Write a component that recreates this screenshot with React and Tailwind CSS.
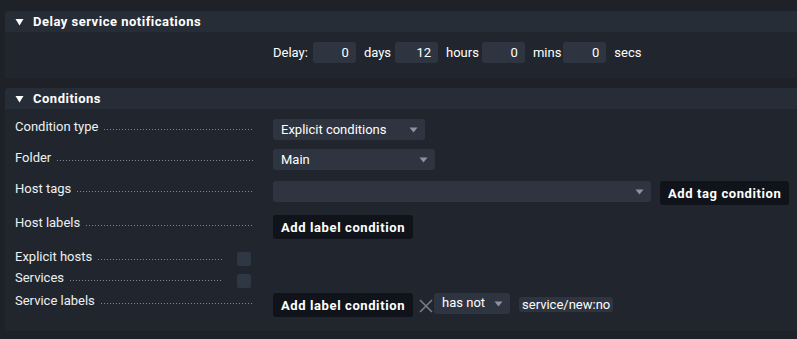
import React from "react";

const font = { fontFamily: "Roboto, 'Noto Sans', sans-serif" };

function Tri() {
  return (
    <svg width="9" height="8" viewBox="0 0 9 8" className="shrink-0">
      <path d="M0.5 1 L8.5 1 L4.5 7.5 Z" fill="#ffffff" />
    </svg>
  );
}

function Arrow() {
  return (
    <svg width="9" height="6" viewBox="0 0 9 6" className="shrink-0">
      <path d="M0.5 0.5 L8.5 0.5 L4.5 5.5 Z" fill="#8c939c" />
    </svg>
  );
}

function Header({ title }) {
  return (
    <div className="h-[21px] bg-[#272d37] flex items-center pl-[10px] rounded-tl-[4px]">
      <Tri />
      <span className="ml-[9px] text-[13px] font-bold text-white tracking-[0.5px] leading-[15px]">
        {title}
      </span>
    </div>
  );
}

function Label({ text, width = "w-[238px]" }) {
  return (
    <div className={`${width} shrink-0 flex items-end h-[15px]`}>
      <span className="text-[13px] leading-[15px] text-[#eef0f2] whitespace-nowrap">{text}</span>
      <div className="flex-1 ml-[6px] mb-[4px] h-px bg-[linear-gradient(to_right,#80868e_1px,transparent_1px)] bg-[length:3px_1px] bg-repeat-x" />
    </div>
  );
}

function Select({ text, width }) {
  return (
    <div className={`${width} h-[21px] bg-[#2e3541] rounded-[3px] flex items-center justify-between pl-[8px] pr-[7px]`}>
      <span className="text-[13px] leading-[15px] text-white">{text}</span>
      <Arrow />
    </div>
  );
}

function Button({ text }) {
  return (
    <div className="h-[24px] bg-[#10141a] rounded-[3px] flex items-center px-[8px] shrink-0">
      <span className="text-[13px] leading-[15px] font-bold text-white tracking-[0.6px] whitespace-nowrap">{text}</span>
    </div>
  );
}

function NumInput({ value }) {
  return (
    <div className="w-[43px] h-[21px] bg-[#2e3541] rounded-[3px] flex items-center justify-end pr-[7px]">
      <span className="text-[13px] leading-[15px] text-white">{value}</span>
    </div>
  );
}

function Checkbox() {
  return <div className="w-[14px] h-[14px] bg-[#2f3744] rounded-[2px]" />;
}

export default function App() {
  return (
    <div style={font} className="w-[797px] h-[339px] bg-[#1e2228] overflow-hidden pt-[11px] pl-[5px]">
      {/* Panel 1 */}
      <div className="w-[792px]">
        <Header title="Delay service notifications" />
        <div className="bg-[#21262e] h-[46px] pl-[268px] pt-[10px] flex items-start">
          <div className="flex items-center h-[21px] text-[13px] leading-[15px] text-white">
            <span>Delay:</span>
            <div className="ml-[5px] mr-[8px]"><NumInput value="0" /></div>
            <span>days</span>
            <div className="ml-[4px] mr-[8px]"><NumInput value="12" /></div>
            <span>hours</span>
            <div className="ml-[3px] mr-[8px]"><NumInput value="0" /></div>
            <span>mins</span>
            <div className="ml-[2px] mr-[8px]"><NumInput value="0" /></div>
            <span>secs</span>
          </div>
        </div>
      </div>

      {/* Panel 2 */}
      <div className="w-[792px] mt-[10px]">
        <Header title="Conditions" />
        <div className="bg-[#21262e] h-[222px] pl-[10px] pt-[10px]">
          <div className="flex items-start h-[21px]">
            <Label text="Condition type" />
            <div className="ml-[20px]"><Select text="Explicit conditions" width="w-[152px]" /></div>
          </div>
          <div className="flex items-start h-[21px] mt-[10px]">
            <Label text="Folder" />
            <div className="ml-[20px] -mt-px"><Select text="Main" width="w-[162px]" /></div>
          </div>
          <div className="flex items-start h-[24px] mt-[10px]">
            <Label text="Host tags" />
            <div className="ml-[20px] flex items-start gap-[9px]">
              <Select text="" width="w-[378px]" />
              <Button text="Add tag condition" />
            </div>
          </div>
          <div className="flex items-start h-[24px] mt-[10px]">
            <Label text="Host labels" />
            <div className="ml-[20px]"><Button text="Add label condition" /></div>
          </div>
          <div className="flex items-start h-[21px] mt-[10px]">
            <Label text="Explicit hosts" width="w-[207px]" />
            <div className="ml-[15px] mt-[3px]"><Checkbox /></div>
          </div>
          <div className="flex items-start h-[21px]">
            <Label text="Services" width="w-[207px]" />
            <div className="ml-[15px] mt-[4px]"><Checkbox /></div>
          </div>
          <div className="flex items-start h-[24px] mt-[2px]">
            <Label text="Service labels" />
            <div className="ml-[20px] flex items-start">
              <Button text="Add label condition" />
              <svg width="14" height="14" viewBox="0 0 14 14" className="ml-[6px] mt-[6px]">
                <path d="M1 1 L13 13 M13 1 L1 13" stroke="#7a8089" strokeWidth="1.5" />
              </svg>
              <div className="ml-px w-[76px] h-[21px] bg-[#2e3541] rounded-[3px] flex items-start justify-between pl-[8px] pr-[7px] pt-[2px]">
                <span className="text-[13px] leading-[15px] text-white">has not</span>
                <div className="mt-[6px]"><Arrow /></div>
              </div>
              <div className="ml-[9px] mt-[4px] h-[15px] bg-[#2e3541] rounded-[3px] px-[3px] flex items-center">
                <span className="text-[13px] leading-[15px] text-white">service/new:no</span>
              </div>
            </div>
          </div>
        </div>
      </div>
    </div>
  );
}
